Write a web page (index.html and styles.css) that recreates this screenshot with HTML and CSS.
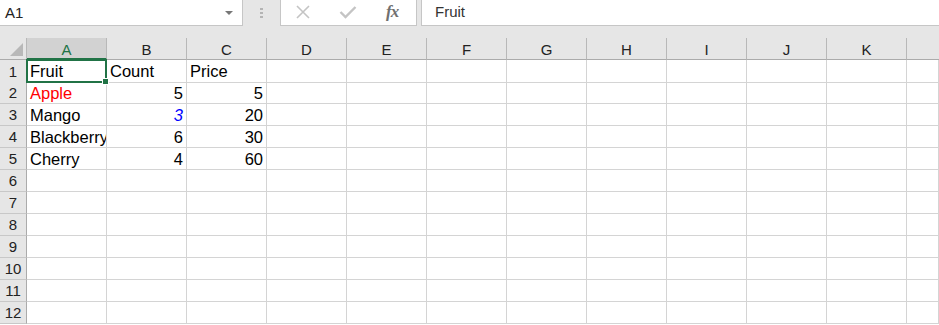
FILE: index.html
```html
<!DOCTYPE html>
<html>
<head>
  <meta charset="UTF-8">
  <title>Book1</title>
  <link rel="stylesheet" href="styles.css">
</head>
<body>
  <!-- Formula bar -->
  <div class="formula-bar">
    <div class="name-box">
      <span>A1</span>
      <span class="caret"></span>
    </div>
    <div class="grip"><i></i><i></i><i></i></div>
    <div class="fx-box">
      <svg width="16" height="14" viewBox="0 0 16 14"><path d="M2 1 L14 13 M14 1 L2 13" stroke="#c4c4c4" stroke-width="1.6" fill="none"/></svg>
      <svg width="18" height="14" viewBox="0 0 18 14"><path d="M1.5 7 L6.5 12 L16.5 2" stroke="#c4c4c4" stroke-width="2.4" fill="none"/></svg>
      <span class="fx">fx</span>
    </div>
    <div class="formula-input">Fruit</div>
  </div>

  <!-- Sheet -->
  <div class="sheet">
    <div class="col-heads">
      <div class="corner"><span></span></div>
      <div class="ch active">A</div>
      <div class="ch">B</div>
      <div class="ch">C</div>
      <div class="ch">D</div>
      <div class="ch">E</div>
      <div class="ch">F</div>
      <div class="ch">G</div>
      <div class="ch">H</div>
      <div class="ch">I</div>
      <div class="ch">J</div>
      <div class="ch">K</div>
      <div class="ch"></div>
    </div>

    <div class="row">
      <div class="rh">1</div>
      <div class="cell selected">Fruit</div><div class="cell">Count</div><div class="cell">Price</div>
      <div class="cell"></div><div class="cell"></div><div class="cell"></div><div class="cell"></div><div class="cell"></div><div class="cell"></div><div class="cell"></div><div class="cell"></div><div class="cell"></div>
    </div>
    <div class="row">
      <div class="rh">2</div>
      <div class="cell red">Apple</div><div class="cell num">5</div><div class="cell num">5</div>
      <div class="cell"></div><div class="cell"></div><div class="cell"></div><div class="cell"></div><div class="cell"></div><div class="cell"></div><div class="cell"></div><div class="cell"></div><div class="cell"></div>
    </div>
    <div class="row">
      <div class="rh">3</div>
      <div class="cell">Mango</div><div class="cell num blue">3</div><div class="cell num">20</div>
      <div class="cell"></div><div class="cell"></div><div class="cell"></div><div class="cell"></div><div class="cell"></div><div class="cell"></div><div class="cell"></div><div class="cell"></div><div class="cell"></div>
    </div>
    <div class="row">
      <div class="rh">4</div>
      <div class="cell">Blackberry</div><div class="cell num">6</div><div class="cell num">30</div>
      <div class="cell"></div><div class="cell"></div><div class="cell"></div><div class="cell"></div><div class="cell"></div><div class="cell"></div><div class="cell"></div><div class="cell"></div><div class="cell"></div>
    </div>
    <div class="row">
      <div class="rh">5</div>
      <div class="cell">Cherry</div><div class="cell num">4</div><div class="cell num">60</div>
      <div class="cell"></div><div class="cell"></div><div class="cell"></div><div class="cell"></div><div class="cell"></div><div class="cell"></div><div class="cell"></div><div class="cell"></div><div class="cell"></div>
    </div>
    <div class="row">
      <div class="rh">6</div>
      <div class="cell"></div><div class="cell"></div><div class="cell"></div><div class="cell"></div><div class="cell"></div><div class="cell"></div><div class="cell"></div><div class="cell"></div><div class="cell"></div><div class="cell"></div><div class="cell"></div><div class="cell"></div>
    </div>
    <div class="row">
      <div class="rh">7</div>
      <div class="cell"></div><div class="cell"></div><div class="cell"></div><div class="cell"></div><div class="cell"></div><div class="cell"></div><div class="cell"></div><div class="cell"></div><div class="cell"></div><div class="cell"></div><div class="cell"></div><div class="cell"></div>
    </div>
    <div class="row">
      <div class="rh">8</div>
      <div class="cell"></div><div class="cell"></div><div class="cell"></div><div class="cell"></div><div class="cell"></div><div class="cell"></div><div class="cell"></div><div class="cell"></div><div class="cell"></div><div class="cell"></div><div class="cell"></div><div class="cell"></div>
    </div>
    <div class="row">
      <div class="rh">9</div>
      <div class="cell"></div><div class="cell"></div><div class="cell"></div><div class="cell"></div><div class="cell"></div><div class="cell"></div><div class="cell"></div><div class="cell"></div><div class="cell"></div><div class="cell"></div><div class="cell"></div><div class="cell"></div>
    </div>
    <div class="row">
      <div class="rh">10</div>
      <div class="cell"></div><div class="cell"></div><div class="cell"></div><div class="cell"></div><div class="cell"></div><div class="cell"></div><div class="cell"></div><div class="cell"></div><div class="cell"></div><div class="cell"></div><div class="cell"></div><div class="cell"></div>
    </div>
    <div class="row">
      <div class="rh">11</div>
      <div class="cell"></div><div class="cell"></div><div class="cell"></div><div class="cell"></div><div class="cell"></div><div class="cell"></div><div class="cell"></div><div class="cell"></div><div class="cell"></div><div class="cell"></div><div class="cell"></div><div class="cell"></div>
    </div>
    <div class="row">
      <div class="rh">12</div>
      <div class="cell"></div><div class="cell"></div><div class="cell"></div><div class="cell"></div><div class="cell"></div><div class="cell"></div><div class="cell"></div><div class="cell"></div><div class="cell"></div><div class="cell"></div><div class="cell"></div><div class="cell"></div>
    </div>
  </div>
</body>
</html>
```

FILE: styles.css
```css
body {
  margin: 0;
  font-family: "Liberation Sans", Arial, sans-serif;
  background: #fff;
  color: #000;
  overflow: hidden;
}

/* Formula bar */
.formula-bar {
  display: flex;
  height: 26px;
  background: #e6e6e6;
}

.name-box {
  box-sizing: border-box;
  width: 243px;
  height: 26px;
  background: #fff;
  border-right: 1px solid #c6c6c6;
  border-bottom: 1px solid #c6c6c6;
  display: flex;
  align-items: center;
  justify-content: space-between;
  padding: 0 9px 0 5px;
  font-size: 15px;
  color: #222;
}

.caret {
  width: 0;
  height: 0;
  border-left: 4px solid transparent;
  border-right: 4px solid transparent;
  border-top: 4px solid #777;
}

.grip {
  width: 37px;
  display: flex;
  flex-direction: column;
  align-items: center;
  justify-content: center;
  gap: 2px;
  padding-bottom: 1px;
}

.grip i {
  width: 3px;
  height: 2px;
  background: #b4b4b4;
}

.fx-box {
  box-sizing: border-box;
  width: 137px;
  height: 26px;
  background: #fff;
  border-left: 1px solid #c6c6c6;
  border-right: 1px solid #c6c6c6;
  border-bottom: 1px solid #c6c6c6;
  display: flex;
  align-items: center;
  padding: 0 14px 2px 14px;
  gap: 28px;
}

.fx {
  font-family: "Liberation Serif", "Times New Roman", serif;
  font-style: italic;
  font-weight: bold;
  font-size: 17px;
  color: #707070;
  letter-spacing: -1px;
  margin-left: 1px;
}

.formula-input {
  flex: 1;
  margin-left: 4px;
  box-sizing: border-box;
  height: 26px;
  background: #fff;
  border-left: 1px solid #c6c6c6;
  border-bottom: 1px solid #c6c6c6;
  display: flex;
  align-items: center;
  padding-left: 13px;
  padding-bottom: 2px;
  font-size: 15px;
  color: #333;
}

/* Sheet */
.sheet {
  background: #e6e6e6;
  padding-top: 12px;
}

.col-heads,
.row {
  display: grid;
  grid-template-columns: 27px repeat(11, 80px) 1fr;
}

.col-heads {
  height: 22px;
}

.corner,
.ch {
  box-sizing: border-box;
  border-right: 1px solid #b8b8b8;
  border-bottom: 1px solid #ababab;
  display: flex;
  align-items: center;
  justify-content: center;
  font-size: 15px;
  color: #222;
  padding-top: 1px;
}

.ch:last-child {
  border-right: none;
}

.corner {
  position: relative;
}

.corner span {
  position: absolute;
  right: 3px;
  bottom: 3px;
  width: 0;
  height: 0;
  border-left: 13px solid transparent;
  border-bottom: 13px solid #b8b8b8;
}

.ch.active {
  background: #d2d2d2;
  color: #217346;
  border-bottom: 2px solid #217346;
  padding-top: 2px;
}

.row {
  height: 22px;
  background: #fff;
}

.rh {
  box-sizing: border-box;
  background: #e6e6e6;
  border-right: 1px solid #ababab;
  border-bottom: 1px solid #c8c8c8;
  display: flex;
  align-items: center;
  justify-content: center;
  font-size: 15px;
  color: #222;
}

.cell {
  box-sizing: border-box;
  border-right: 1px solid #d4d4d4;
  border-bottom: 1px solid #d4d4d4;
  font-size: 16.5px;
  line-height: 21px;
  padding: 1px 3px 0 3px;
  white-space: nowrap;
  overflow: hidden;
}

.cell.num {
  text-align: right;
}

.red {
  color: #ff0000;
}

.blue {
  color: #0000ff;
  font-style: italic;
}

.cell.selected {
  position: relative;
  overflow: visible;
  z-index: 2;
}

.cell.selected::after {
  content: "";
  position: absolute;
  left: -1px;
  top: -1px;
  right: -1px;
  bottom: -1px;
  border: 2px solid #217346;
}

.cell.selected::before {
  content: "";
  position: absolute;
  right: -3px;
  bottom: -3px;
  width: 5px;
  height: 5px;
  background: #217346;
  border: 1px solid #fff;
  z-index: 3;
}
```
